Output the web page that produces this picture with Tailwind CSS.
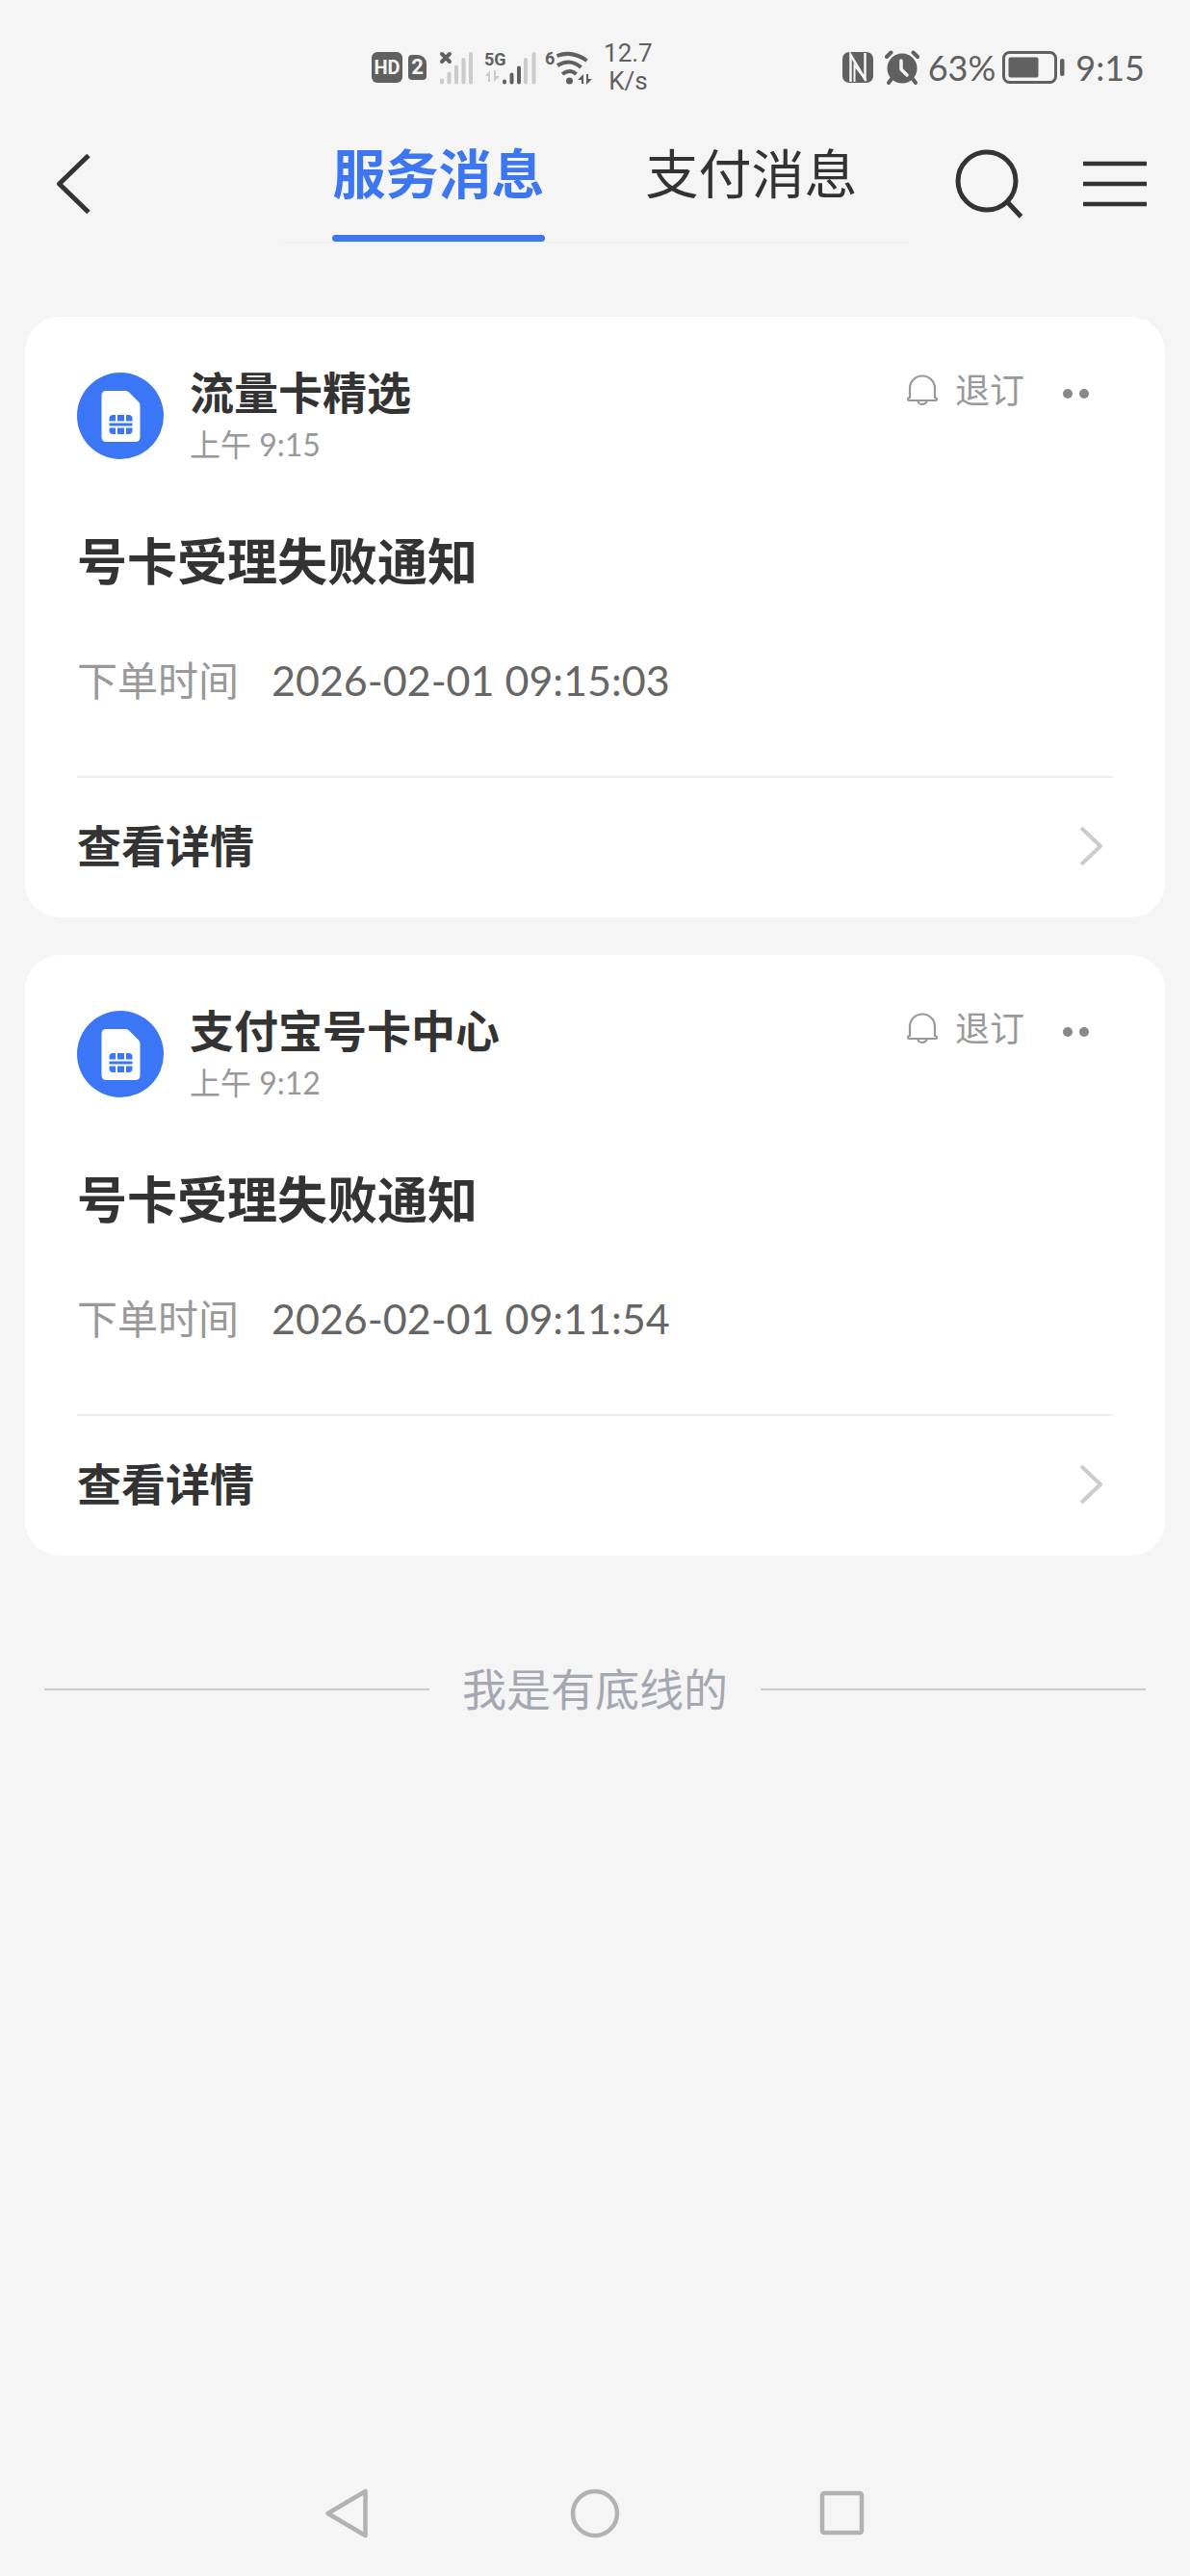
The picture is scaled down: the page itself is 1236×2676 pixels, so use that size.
<!DOCTYPE html>
<html lang="zh-CN">
<head>
    <meta charset="UTF-8">
    <meta name="viewport" content="width=device-width, initial-scale=1.0">
    <title>服务消息</title>
    <script src="https://cdn.jsdelivr.net/npm/@tailwindcss/browser@4"></script>
    <style>
        body {
            font-family: Lato, 'Noto Sans CJK SC', sans-serif;
        }
    </style>
</head>
<body class="flex min-h-screen flex-col bg-[#f5f5f5] text-[#333333]">

    <!-- Shared icons -->
    <svg class="hidden" aria-hidden="true">
        <symbol id="icon-sim" viewBox="0 0 90 90">
            <circle cx="45" cy="45" r="45" fill="#3b76f6"/>
            <path d="M31 19h19.500q2 0 3.500 1.500l10 10q1.500 1.500 1.500 3.500v33q0 5-5 5h-30q-5 0-5-5v-43q0-5 5-5z" fill="#fff"/>
            <path d="M33.500 50.500v-2.500q0-4 4-4h2.500v6.500zM42 44h7v6.500h-7zM51 44h2.500q4 0 4 4v2.500h-6.500zM33.500 52.500h24v3h-24zM33.500 57.500h6.500v6.500h-2.500q-4 0-4-4zM42 57.500h7v6.500h-7zM51 57.500h6.500v2.500q0 4-4 4h-2.500z" fill="#3b76f6"/>
        </symbol>
        <symbol id="icon-bell" viewBox="0 0 32 32">
            <path d="M3 24V14.500a13 13 0 0 1 26 0V24q2 .4 2 1.600T29.500 27h-27Q1 27 1 25.600T3 24z" fill="none" stroke="#999" stroke-width="2.200"/>
            <path d="M11.500 27.500a4.500 3.500 0 0 0 9 0" fill="none" stroke="#999" stroke-width="2.200"/>
        </symbol>
        <symbol id="icon-arrow" viewBox="0 0 28 44">
            <path d="M3 3l20 19L3 41" fill="none" stroke="#cccccc" stroke-width="4" stroke-linejoin="round"/>
        </symbol>
    </svg>

    <!-- Status bar -->
    <div class="flex h-[130px] items-center justify-end gap-[197px] pt-[10px] pr-[47px] text-[#606060]">
        <div class="flex items-center">
            <span class="flex h-8 w-8 items-center justify-center rounded-md bg-[#606060] font-[Roboto] text-[20px] leading-none font-bold text-[#f5f5f5]">HD</span>
            <span class="ml-[6px] flex h-[26px] w-[19px] items-center justify-center rounded-[4px] rounded-tr-[9px] bg-[#606060] font-[Roboto] text-[22px] leading-none font-bold text-[#f5f5f5]">2</span>
            <svg class="ml-[13px] h-9 w-9" viewBox="0 0 36 36" fill="none" stroke-linecap="round">
                <path d="M3 33.500v-2M10.500 33.500v-9M18 33.500v-16M25.500 33.500V10M33 33.500V4" stroke="#cbcbcb" stroke-width="4"/>
                <path d="M3 4l8 8M11 4l-8 8" stroke="#606060" stroke-width="4"/>
            </svg>
            <svg class="ml-3 h-9 w-[54px] overflow-visible" viewBox="0 0 54 36" fill="none" stroke-linecap="round">
                <text x="-1" y="16" font-family="Roboto" font-size="18" font-weight="700" fill="#606060">5G</text>
                <path d="M0 27l5-6v12H3v-6zM15 27l-6 6V21h2v6z" fill="#cbcbcb"/>
                <path d="M42 33.500V10M50.500 33.500V4" stroke="#cbcbcb" stroke-width="4"/>
                <path d="M20 33.500v-1M27.500 33.500v-8M35 33.500v-15" stroke="#606060" stroke-width="4"/>
            </svg>
            <svg class="ml-[9px] h-9 w-12 overflow-visible" viewBox="0 0 48 36" fill="none" stroke="#606060" stroke-width="4">
                <text x="-1" y="15" font-family="Roboto" font-size="18" font-weight="700" fill="#606060" stroke="none">6</text>
                <path d="M11.500 6q16-6 31 5M12 16q13-8 24.500 2M17 25q8-6 14.500 0"/>
                <circle cx="24.500" cy="32" r="3.500" fill="#606060" stroke="none"/>
                <path d="M33 31l6-6v10h-2v-4zM48 30l-6 6V25h2v5z" fill="#606060" stroke="none"/>
            </svg>
            <span class="ml-3 text-center font-[Roboto] text-[26px] leading-[29px]">12.7<br>K/s</span>
        </div>
        <div class="flex items-center">
            <svg class="h-8 w-8" viewBox="0 0 32 32">
                <rect width="32" height="32" rx="7" fill="#606060"/>
                <path d="M8.500 31V3l16 27M23.500 1v28" fill="none" stroke="#f5f5f5" stroke-width="2.500"/>
                <path d="M12.500 31V14l11 14" fill="none" stroke="#f5f5f5" stroke-width="2"/>
            </svg>
            <svg class="ml-3 h-9 w-9" viewBox="0 0 36 36" fill="none" stroke="#606060" stroke-linecap="round">
                <circle cx="18" cy="19" r="15.500" fill="#606060" stroke="none"/>
                <path d="M2 7l4.500-4.500M34 7l-4.500-4.500M7 30l-3 4M29 30l3 4" stroke-width="4"/>
                <path d="M17 11v9l6 6" stroke="#f5f5f5" stroke-width="3.500"/>
            </svg>
            <span class="ml-[9px] text-[36px] leading-none">63%</span>
            <svg class="ml-[7px] h-[34px] w-[65px]" viewBox="0 0 65 34">
                <rect x="1.500" y="1.500" width="54" height="31" rx="6" fill="none" stroke="#606060" stroke-width="3"/>
                <rect x="6.500" y="6.500" width="31" height="21" rx="2" fill="#606060"/>
                <rect x="60" y="8" width="4.500" height="18" rx="2" fill="#606060"/>
            </svg>
            <span class="ml-[11px] text-[36px] leading-none">9:15</span>
        </div>
    </div>

    <!-- Header with tabs -->
    <header class="grid h-[122px] grid-cols-[1fr_auto_1fr] items-center">
        <button type="button" aria-label="返回" class="ml-[46px] h-20 w-14">
            <svg class="mx-auto h-[66px] w-11" viewBox="0 0 44 66" fill="none">
                <path d="M40 3.500L9.500 33 40 62.500" stroke="#333" stroke-width="5" stroke-linejoin="round"/>
            </svg>
        </button>
        <nav class="flex gap-[105px] self-stretch border-b border-[#eeeeee] px-[52px] text-[55px] leading-[100px]">
            <a href="#service" class="flex flex-col justify-between font-bold text-[#3c76f0]">
                服务消息
                <span class="h-[7px] rounded-full bg-[#3c76f0]"></span>
            </a>
            <a href="#payment">支付消息</a>
        </nav>
        <div class="flex items-center justify-end gap-[60px] pr-[42px]">
            <button type="button" aria-label="搜索">
                <svg class="h-[74px] w-[74px]" viewBox="0 0 74 74" fill="none" stroke="#333" stroke-width="5">
                    <circle cx="35" cy="34" r="30"/>
                    <path d="M56 55.500L70.500 71"/>
                </svg>
            </button>
            <button type="button" aria-label="菜单">
                <svg class="h-[54px] w-[70px]" viewBox="0 0 70 54">
                    <path d="M1 6h66M1 27h66M1 48h66" stroke="#333" stroke-width="4.500"/>
                </svg>
            </button>
        </div>
    </header>

    <!-- Message list -->
    <main class="px-[26px] pt-[77px]">
        <div id="service" class="flex flex-col gap-[39px]">

            <article class="rounded-[36px] bg-white pt-[58px]">
                <div class="flex px-[54px]">
                    <svg class="h-[90px] w-[90px]"><use href="#icon-sim"/></svg>
                    <div class="-mt-2 ml-[27px] flex-1">
                        <h2 class="text-[46px] leading-[58px] font-bold">流量卡精选</h2>
                        <p class="text-[32px] leading-[50px] text-[#999999]">上午 9:15</p>
                    </div>
                    <div class="flex h-9 items-center">
                        <button type="button" class="flex items-center gap-[18px] text-[36px] leading-9 text-[#999999]">
                            <svg class="h-8 w-8"><use href="#icon-bell"/></svg>
                            退订
                        </button>
                        <button type="button" aria-label="更多" class="mr-[25px] ml-10 flex h-9 items-center gap-[7px] pt-2">
                            <span class="h-[10px] w-[10px] rounded-full bg-[#888888]"></span>
                            <span class="h-[10px] w-[10px] rounded-full bg-[#888888]"></span>
                        </button>
                    </div>
                </div>
                <h3 class="mt-[60px] px-[54px] text-[52px] leading-[72px] font-bold">号卡受理失败通知</h3>
                <dl class="mt-[56px] flex items-center px-[54px] leading-[64px]">
                    <dt class="text-[42px] text-[#999999]">下单时间</dt>
                    <dd class="ml-[34px] text-[43px] text-[#666666]">2026-02-01 09:15:03</dd>
                </dl>
                <a href="#detail-1" class="mx-[54px] mt-[67px] flex h-[147px] items-center justify-between border-t-2 border-[#eeeeee] pb-1 text-[46px] leading-[60px] font-bold">
                    查看详情
                    <svg class="mr-[8px] h-11 w-7"><use href="#icon-arrow"/></svg>
                </a>
            </article>

            <article class="rounded-[36px] bg-white pt-[58px]">
                <div class="flex px-[54px]">
                    <svg class="h-[90px] w-[90px]"><use href="#icon-sim"/></svg>
                    <div class="-mt-2 ml-[27px] flex-1">
                        <h2 class="text-[46px] leading-[58px] font-bold">支付宝号卡中心</h2>
                        <p class="text-[32px] leading-[50px] text-[#999999]">上午 9:12</p>
                    </div>
                    <div class="flex h-9 items-center">
                        <button type="button" class="flex items-center gap-[18px] text-[36px] leading-9 text-[#999999]">
                            <svg class="h-8 w-8"><use href="#icon-bell"/></svg>
                            退订
                        </button>
                        <button type="button" aria-label="更多" class="mr-[25px] ml-10 flex h-9 items-center gap-[7px] pt-2">
                            <span class="h-[10px] w-[10px] rounded-full bg-[#888888]"></span>
                            <span class="h-[10px] w-[10px] rounded-full bg-[#888888]"></span>
                        </button>
                    </div>
                </div>
                <h3 class="mt-[60px] px-[54px] text-[52px] leading-[72px] font-bold">号卡受理失败通知</h3>
                <dl class="mt-[56px] flex items-center px-[54px] leading-[64px]">
                    <dt class="text-[42px] text-[#999999]">下单时间</dt>
                    <dd class="ml-[34px] text-[43px] text-[#666666]">2026-02-01 09:11:54</dd>
                </dl>
                <a href="#detail-2" class="mx-[54px] mt-[67px] flex h-[147px] items-center justify-between border-t-2 border-[#eeeeee] pb-1 text-[46px] leading-[60px] font-bold">
                    查看详情
                    <svg class="mr-[8px] h-11 w-7"><use href="#icon-arrow"/></svg>
                </a>
            </article>
        </div>

        <!-- End of list -->
        <div class="mt-[109px] flex items-center gap-[34px] px-5 text-[46px] leading-[60px] text-[#a5a8b0]">
            <span class="h-[2px] flex-1 bg-[#cccccc]"></span>
            我是有底线的
            <span class="h-[2px] flex-1 bg-[#cccccc]"></span>
        </div>
    </main>

    <!-- System navigation -->
    <nav class="mx-auto mt-auto grid h-[130px] w-5/8 grid-cols-3 place-items-center">
        <button type="button" aria-label="返回上一页">
            <svg class="h-14 w-14" viewBox="0 0 56 56" fill="none" stroke="#b2b2b2" stroke-width="4.500" stroke-linejoin="round">
                <path d="M46.500 5v46L7.500 28z"/>
            </svg>
        </button>
        <button type="button" aria-label="主屏幕">
            <svg class="h-14 w-14" viewBox="0 0 56 56" fill="none" stroke="#b2b2b2" stroke-width="4.500">
                <circle cx="28" cy="28" r="23"/>
            </svg>
        </button>
        <button type="button" aria-label="最近任务">
            <svg class="h-14 w-14" viewBox="0 0 56 56" fill="none" stroke="#b2b2b2" stroke-width="4.500">
                <rect x="6" y="7" width="41" height="41" rx="2"/>
            </svg>
        </button>
    </nav>

</body>
</html>
